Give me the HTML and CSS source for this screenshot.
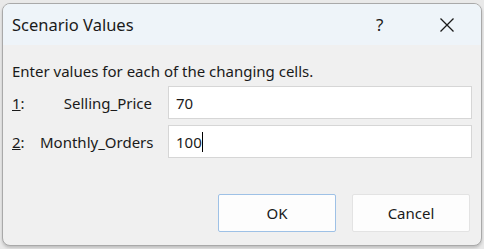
FILE: index.html
```html
<!DOCTYPE html>
<html>
<head>
<meta charset="utf-8">
<link rel="stylesheet" href="styles.css">
</head>
<body>
<div class="window">
  <div class="titlebar">
    <span class="title">Scenario Values</span>
    <span class="help">?</span>
    <span class="close">
      <svg width="16" height="16" viewBox="0 0 16 16"><path d="M1.5 1.5 L14.5 14.5 M14.5 1.5 L1.5 14.5" stroke="#1a1a1a" stroke-width="1.3" fill="none"/></svg>
    </span>
  </div>
  <div class="content">
    <p class="intro">Enter values for each of the changing cells.</p>
    <div class="row">
      <span class="num"><u>1</u>:</span>
      <span class="name">Selling_Price</span>
      <div class="field">70</div>
    </div>
    <div class="row">
      <span class="num"><u>2</u>:</span>
      <span class="name">Monthly_Orders</span>
      <div class="field">100<span class="caret"></span></div>
    </div>
    <div class="buttons">
      <div class="btn default">OK</div>
      <div class="btn">Cancel</div>
    </div>
  </div>
</div>
</body>
</html>
```
FILE: styles.css
```css
html, body {
  margin: 0;
  padding: 0;
}
body {
  width: 484px;
  height: 249px;
  background: #e9e9e9;
  font-family: "Noto Sans", "Open Sans", sans-serif;
  color: #1a1a1a;
  overflow: hidden;
}
.window {
  margin: 3px 0 0 2px;
  width: 478px;
  height: 241px;
  border: 1px solid #a9a9a9;
  border-radius: 8px;
  background: #f0f0f0;
  overflow: hidden;
  box-shadow: 0 2px 3px rgba(0,0,0,0.18);
  display: flex;
  flex-direction: column;
}
.titlebar {
  height: 41px;
  background: #eef4f9;
  display: flex;
  align-items: center;
  padding-left: 9px;
  flex-shrink: 0;
}
.title {
  font-size: 16.5px;
  flex: 1;
  padding-bottom: 1px;
}
.help {
  font-size: 17px;
  width: 14px;
  margin-right: 49px;
}
.close {
  display: flex;
  margin-right: 26px;
}
.content {
  padding: 0 9px 0 9px;
  display: flex;
  flex-direction: column;
}
.intro {
  margin: 16px 0 0 0;
  font-size: 15px;
  line-height: 21px;
}
.row {
  display: flex;
  align-items: center;
  font-size: 15px;
  margin-top: 6px;
}
.intro + .row {
  margin-top: 4px;
}
.num {
  width: 28px;
}
.name {
  width: 112px;
  text-align: right;
  white-space: nowrap;
}
.field {
  margin-left: 16px;
  flex: 1;
  height: 31px;
  background: #fff;
  border: 1px solid #d6d6d6;
  display: flex;
  align-items: center;
  padding-left: 7px;
  font-size: 15px;
}
.caret {
  display: inline-block;
  width: 1px;
  height: 20px;
  background: #000;
}
.buttons {
  display: flex;
  justify-content: flex-end;
  gap: 16px;
  margin-top: 36px;
  padding-right: 2px;
}
.btn {
  width: 116px;
  height: 36px;
  border: 1px solid #e3e3e3;
  background: #fdfdfd;
  border-radius: 2px;
  display: flex;
  align-items: center;
  justify-content: center;
  font-size: 15px;
}
.btn.default {
  border-color: #9ec1e6;
}
```
